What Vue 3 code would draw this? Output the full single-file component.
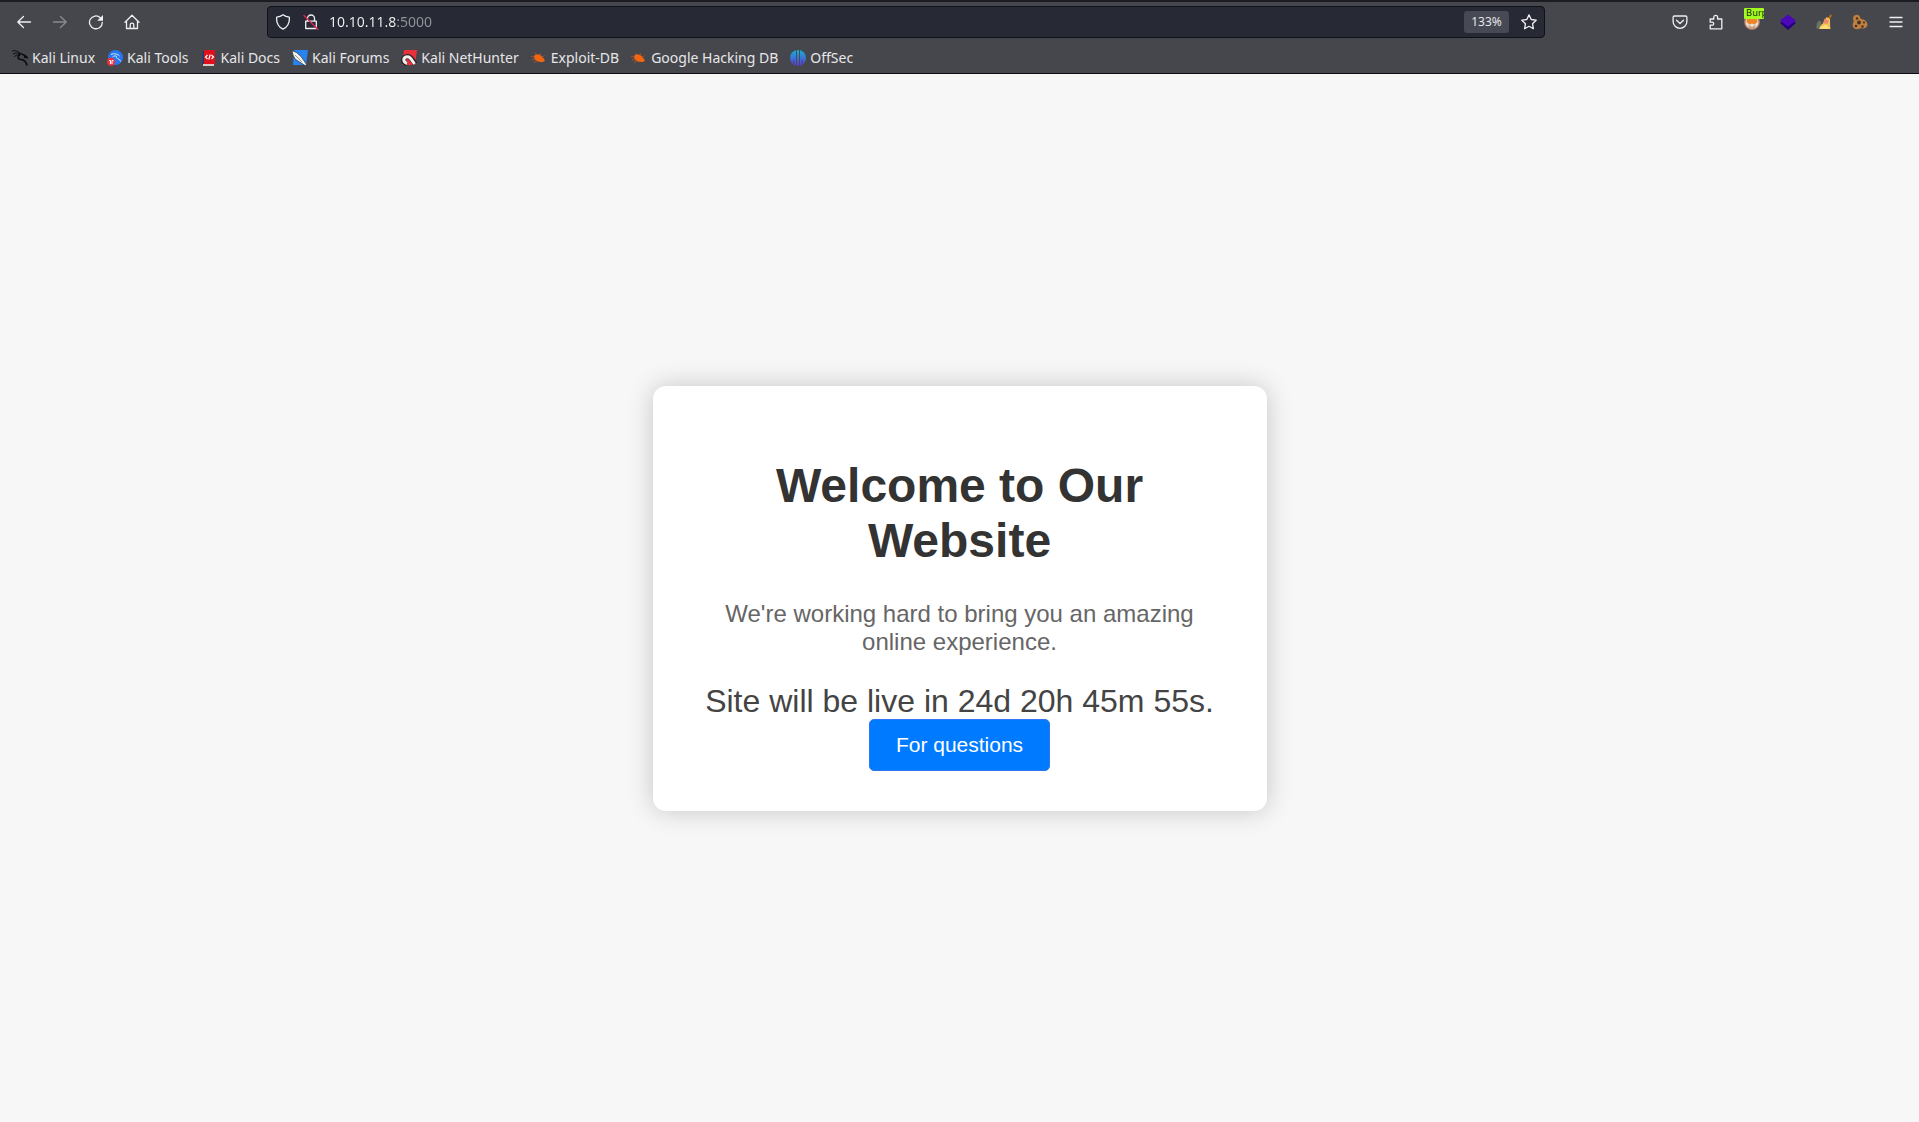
<script setup>
const bookmarks = [
  { name: 'Kali Linux', icon: 'linux' },
  { name: 'Kali Tools', icon: 'tools' },
  { name: 'Kali Docs', icon: 'docs' },
  { name: 'Kali Forums', icon: 'forums' },
  { name: 'Kali NetHunter', icon: 'nethunter' },
  { name: 'Exploit-DB', icon: 'bug' },
  { name: 'Google Hacking DB', icon: 'bug' },
  { name: 'OffSec', icon: 'offsec' },
]
</script>

<template>
  <div class="window">
    <header class="chrome">
      <div class="toolbar">
        <nav class="tools" aria-label="Navigation">
          <button class="tool" aria-label="Back">
            <svg class="line" viewBox="0 0 16 16"><path d="M14.5 8H2M7.5 2.5 1.8 8l5.700 5.500" /></svg>
          </button>
          <button class="tool" aria-label="Forward" disabled>
            <svg class="line" viewBox="0 0 16 16"><path d="M1.5 8H14M8.5 2.5 14.2 8l-5.700 5.500" /></svg>
          </button>
          <button class="tool" aria-label="Reload">
            <svg class="line" viewBox="0 0 16 16"><path d="M14.3 8.4A6.4 6.4 0 1 1 12.3 3.7" /><path class="solid" d="M15 1v5.8H9.2z" /></svg>
          </button>
          <button class="tool" aria-label="Home">
            <svg class="line" viewBox="0 0 16 16"><path d="M1 8.2 8 1.2l7 7M2.5 7v7.5h11V7M6.2 14.5V11a1.8 1.8 0 0 1 3.6 0v3.5" /></svg>
          </button>
        </nav>
        <div class="spring"></div>
        <div class="address">
          <svg class="line" viewBox="0 0 16 16"><path d="M8 .8c2 1.6 4 2.2 6.3 2.4C14.8 8 12.8 12.7 8 15.2 3.2 12.7 1.2 8 1.7 3.2 4 3 6 2.4 8 .8z" /></svg>
          <svg class="line lock" viewBox="0 0 16 16"><path d="M4.5 7V4.5a3.5 3.5 0 0 1 7 0V7M2.7 7.2h10.600v7.300H2.700z" /><path class="slash" d="M1 1.500 15 15.500" /></svg>
          <input class="url" type="text" aria-label="Address" value="10.10.11.8:5000" />
          <button class="zoom">133%</button>
          <button class="star" aria-label="Bookmark this page">
            <svg class="line" viewBox="0 0 16 16"><path d="m8 .9 2.200 4.600 5 .7-3.700 3.500.9 5L8 12.300l-4.400 2.400.9-5L.8 6.200l5-.7z" /></svg>
          </button>
        </div>
        <div class="spring"></div>
        <div class="tools">
          <button class="tool" aria-label="Save to Pocket">
            <svg class="line" viewBox="0 0 16 16"><path d="M2.500 2h11c.8 0 1.400.6 1.400 1.400v4a6.900 6.900 0 0 1-13.800 0v-4C1.100 2.600 1.700 2 2.500 2zM4.500 6.200 8 9.500l3.500-3.300" /></svg>
          </button>
          <button class="tool" aria-label="Extensions">
            <svg class="line" viewBox="0 0 16 16"><path d="M2.200 5h3.600V3.200a1.900 1.900 0 0 1 3.800 0V5h4.200v9.800H2.200v-3.600h2a1.500 1.500 0 0 0 0-3h-2z" /></svg>
          </button>
          <button class="tool proxy" aria-label="FoxyProxy: Burp">
            <svg viewBox="0 0 16 16"><circle cx="8" cy="8" r="8" fill="#a8775a" /><circle cx="8" cy="8" r="6.600" fill="#e9dfd6" /><path d="M3 3h10l.5 5-3 2.500-2.500-1-2.500 1-3-2.500z" fill="#ee8423" /><path d="M4 10.500 8 13l4-2.500-1.500 3.500h-5z" fill="#c99d7b" /></svg>
            <span class="badge">Burp</span>
          </button>
          <button class="tool" aria-label="Wappalyzer">
            <svg viewBox="0 0 16 16"><path d="m0 9 8-5 8 5-8 7z" fill="#260080" /><path d="m0 6.500 8-6 8 6-8 6z" fill="#4b08b8" /></svg>
          </button>
          <button class="tool" aria-label="Cache cleaner">
            <svg viewBox="0 0 16 16"><path d="M.5 14.500C0 11 1 8 3 6.500L5.500 8 4 15z" fill="#68735f" /><path d="M14.500.2 16 1.500l-2.500 4-2-1z" fill="#b56d12" /><path d="M10.500 3 14 5c.2 3.500-.2 6 .5 10H3c1-3 2.500-5 4.500-6z" fill="#f3c35c" /><path d="m8.500 4.500 4.500 2-1.500 3.500L7 9z" fill="#ed8969" /><path d="m5 13 5-2 4 3.500H4z" fill="#ffe17b" /></svg>
          </button>
          <button class="tool" aria-label="Cookie editor">
            <svg viewBox="0 0 16 16"><path d="M2.500 1.500C5 0 8 1 8.500 4.500c.5 1.200 2.500.5 4 1.500 3.500 2.500 4 6.500.8 8-2.300.9-4-.2-6 .8C4 16 1 14.500.6 11.500.4 9.500 2 8 1.500 6.500.8 4.500 1 2.500 2.500 1.500z" fill="#bd8040" /><g fill="#4a3020"><circle cx="5" cy="4.500" r="1.200" /><circle cx="7" cy="8.500" r="1.900" /><circle cx="4" cy="12" r="1.300" /><circle cx="10.500" cy="12.500" r="1.200" /><circle cx="12" cy="8.500" r="1.100" /></g></svg>
          </button>
          <button class="tool" aria-label="Menu">
            <svg class="line" viewBox="0 0 16 16"><path d="M2 3.500h12M2 8h12M2 12.500h12" /></svg>
          </button>
        </div>
      </div>
      <nav class="bookmarks" aria-label="Bookmarks">
        <a v-for="b in bookmarks" :key="b.name" href="#" class="bookmark">
          <svg v-if="b.icon === 'linux'" viewBox="0 0 16 16" fill="none" stroke="#0b0b0d"><path d="M0 1c3-.8 5.500 0 8 2M1 4c2.500-1.300 5-1 7-.5M2 7c1.500-1.700 3.500-2.500 6-2" stroke-width=".9" /><path d="M7 3.500c3 0 4.500 1 6.500 2.500l1.500 1.500-3-.5M8 4.500c-3 2-2.500 4.500 1 5 3.500.3 5 2 6 6" stroke-width="1.600" /></svg>
          <svg v-else-if="b.icon === 'tools'" viewBox="0 0 16 16"><circle cx="8.500" cy="7.500" r="7.500" fill="#2777f0" /><path d="M4 4.500c3.500-1.500 6.500-.5 8.500 1.500M5.500 7C7 5.700 8.500 5.700 9.500 6.200c-1 1.800 1 2.300 3 3.300l1 2" fill="none" stroke="#d9edff" /><circle cx="4" cy="11.700" r="4" fill="#f0313c" /><path d="M2 10.500h1.500V14M5 14v-3.500h1.500" fill="none" stroke="#fff" /></svg>
          <svg v-else-if="b.icon === 'docs'" viewBox="0 0 16 16"><path d="M1.500 1h3v14h-3z" fill="#173a78" /><path d="M3 0h11v14H3z" fill="#df101b" /><path d="M2 14h11v2H2z" fill="#d8c9c6" /><path d="m6.500 5-2 2 2 2m4-4 2 2-2 2M9.200 4.500l-1.400 5" fill="none" stroke="#fff" stroke-width="1.200" /></svg>
          <svg v-else-if="b.icon === 'forums'" viewBox="0 0 16 16"><path d="M2 0h14l-2 15H1z" fill="#2782f2" /><path d="m0 .5 4.500 2L9 6.500l6 8.500-2 .5L7.500 12 3 9 1 5z" fill="#f2f1ea" stroke="#282b30" stroke-width=".7" /><path d="m3 5 7 7" stroke="#66717a" stroke-width=".7" /></svg>
          <svg v-else-if="b.icon === 'nethunter'" viewBox="0 0 16 16"><path d="M3 0h13l-2 15H1z" fill="#e8313b" /><path d="M6 14c-4.500-1.500-4.500-6-1-7.200C9 5.700 11 9 14 14" fill="none" stroke="#24262b" stroke-width="5" /><path d="M6 13.500c-4-1.500-4-5.500-1-6.500 4-1 5.500 2.500 8.500 7" fill="none" stroke="#f4efed" stroke-width="3" /><path d="m6 10.500 5 3.500" stroke="#e8313b" stroke-width="1.500" /></svg>
          <svg v-else-if="b.icon === 'bug'" viewBox="0 0 16 16"><path d="M3 6C5.500 3 9 4.500 11.500 7l2.500 3.500-1.500 1.200c-3.500.8-7 0-9-3z" fill="#f36611" /><path d="M3 7 0 6.500m4 3-3 .5M6 11l-3 1.500M6 5 4 3M9 5.500l.5-2.500M11.500 7.500l2-2" stroke="#b65525" stroke-width=".8" /></svg>
          <svg v-else viewBox="0 0 16 16"><defs><linearGradient id="offsec-fill" x1="0" y1="0" x2="0" y2="1"><stop offset="0" stop-color="#17b0d0" /><stop offset="1" stop-color="#5939d8" /></linearGradient></defs><circle cx="8" cy="8" r="8" fill="url(#offsec-fill)" /><path d="M6.500 0v16M9.500 0v16M3.800 10v5M12.200 10v5" stroke="#46474c" stroke-width=".9" /></svg>
          <span>{{ b.name }}</span>
        </a>
      </nav>
    </header>
    <main class="page">
      <section class="card">
        <h1>Welcome to Our Website</h1>
        <p>We're working hard to bring you an amazing online experience.</p>
        <div class="countdown">Site will be live in 24d 20h 45m 55s.</div>
        <button class="questions">For questions</button>
      </section>
    </main>
  </div>
</template>

<style>
body {
  margin: 0;
}
</style>

<style scoped>
.window {
  display: flex;
  flex-direction: column;
  min-height: 100vh;
  background: #f7f7f7;
  font-family: "Liberation Sans", Arial, sans-serif;
}
.chrome {
  border-top: 2px solid #1c1b22;
  border-bottom: 1px solid #0c0c14;
  background: #46474c;
  color: #e6e6e8;
  font: 14px/20px "Noto Sans", sans-serif;
}
button {
  border: 0;
  padding: 0;
  background: none;
  color: inherit;
  font: inherit;
}
svg {
  display: block;
  flex: none;
  width: 16px;
  height: 16px;
}
.line {
  fill: none;
  stroke: #f0f0f2;
  stroke-width: 1.3;
  stroke-linejoin: round;
  stroke-linecap: round;
}
.line .solid {
  fill: #f0f0f2;
  stroke: none;
}
.line .slash {
  stroke: #e22850;
}
.toolbar {
  display: flex;
  align-items: center;
  height: 40px;
  padding: 0 5px 0 6px;
}
.tools {
  display: flex;
}
.tool {
  display: flex;
  align-items: center;
  justify-content: center;
  width: 36px;
  height: 32px;
}
.tool:disabled {
  opacity: 0.4;
}
.spring {
  flex: 0 1 117px;
}
.address {
  display: flex;
  flex: 1;
  align-items: center;
  box-sizing: border-box;
  height: 32px;
  padding: 0 7px;
  border: 1px solid #0f1018;
  border-radius: 4px;
  background: #272935;
}
.lock {
  margin: 0 10px 0 12px;
}
.url {
  flex: 1;
  min-width: 0;
  padding: 0;
  border: 0;
  outline: 0;
  background: linear-gradient(90deg, #f4f4f6 67px, #92939a 67px);
  background-clip: text;
  color: transparent;
  font: inherit;
}
.zoom {
  width: 45px;
  height: 22px;
  border-radius: 3px;
  background: #474a54;
  font-size: 12px;
}
.star {
  margin-left: 12px;
}
.proxy {
  position: relative;
}
.badge {
  position: absolute;
  top: 2px;
  right: 6px;
  box-sizing: border-box;
  width: 20px;
  height: 11px;
  padding-left: 2px;
  overflow: hidden;
  border-radius: 1px;
  background: #a4fb22;
  color: #16300a;
  font: 9px/11px "DejaVu Sans", sans-serif;
  text-align: left;
}
.bookmarks {
  display: flex;
  gap: 12px;
  height: 31px;
  padding-left: 12px;
}
.bookmark {
  display: flex;
  align-items: center;
  gap: 4px;
  height: 31px;
  color: inherit;
  text-decoration: none;
  white-space: nowrap;
}
.page {
  display: flex;
  flex: 1;
  align-items: center;
  justify-content: center;
}
.card {
  box-sizing: border-box;
  width: 100%;
  max-width: 614px;
  padding: 40px;
  border-radius: 13px;
  background: #fff;
  box-shadow: 0 0 27px rgba(0, 0, 0, 0.2);
  text-align: center;
}
h1 {
  margin: 32px 0;
  color: #333;
  font-size: 48px;
  line-height: 55px;
}
p {
  margin: 0 0 27px;
  color: #666;
  font-size: 24px;
  line-height: 28px;
}
.countdown {
  color: #444;
  font-size: 32px;
  line-height: 36px;
}
.questions {
  height: 52px;
  padding: 0 26px;
  border: 1px solid #2f77f2;
  border-radius: 5px;
  background: #007bff;
  color: #fff;
  font: 21px/24px "Liberation Sans", Arial, sans-serif;
}
</style>
